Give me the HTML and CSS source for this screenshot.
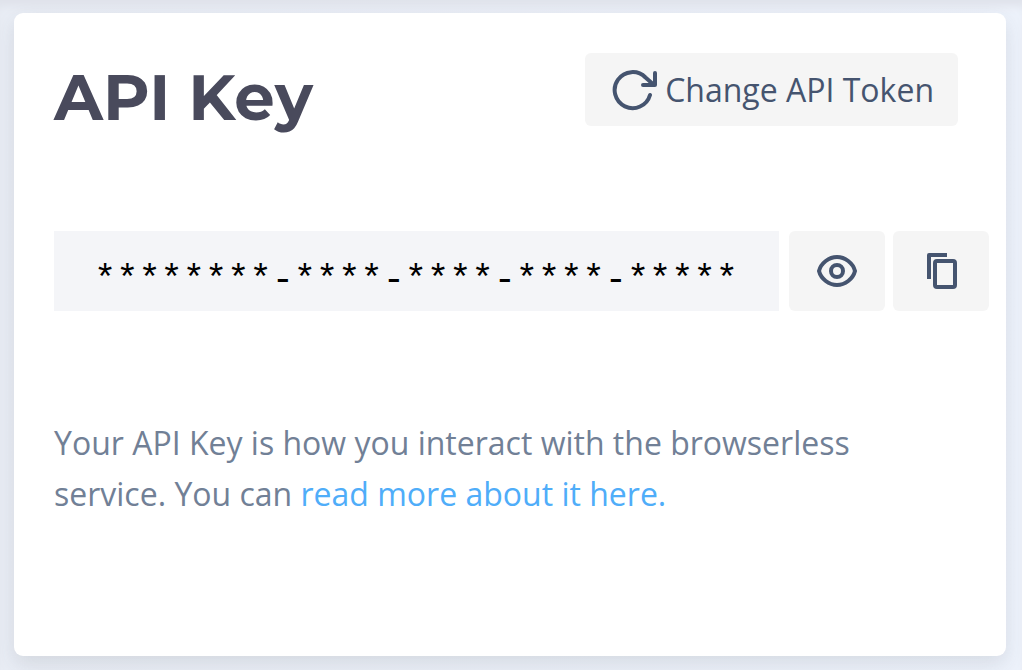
FILE: index.html
```html
<!DOCTYPE html>
<html lang="en">
<head>
<meta charset="utf-8">
<meta name="viewport" content="width=device-width, initial-scale=1">
<title>API Key</title>
<link rel="stylesheet" href="styles.css">
</head>
<body>
<main class="card">
  <header class="card-header">
    <h1 class="title"><label for="api-key">API Key</label></h1>
    <button class="button change-button" type="button">
      <svg class="refresh-icon" viewBox="0 0 46 42" fill="none" stroke="currentColor" stroke-width="4" stroke-linecap="round" stroke-linejoin="round" aria-hidden="true">
        <path d="M38 26A18 18 0 1 1 33.500 8.500L42 16M43 4v12H31"/>
      </svg>
      <span>Change API Token</span>
    </button>
  </header>
  <div class="key-row">
    <input class="key-input" id="api-key" type="text" value="********-****-****-****-*****" readonly>
    <button class="button icon-button" type="button" aria-label="Show API key">
      <svg class="icon" viewBox="0 0 40 40" fill="none" stroke="currentColor" stroke-width="4" aria-hidden="true">
        <path d="M2 20C4 12 12 6 20 6s16 6 18 14c-2 8-10 14-18 14S4 28 2 20Z"/>
        <circle cx="20" cy="20" r="6"/>
      </svg>
    </button>
    <button class="button icon-button" type="button" aria-label="Copy API key">
      <svg class="icon" viewBox="0 0 40 40" fill="none" stroke="currentColor" stroke-width="4" stroke-linejoin="round" aria-hidden="true">
        <path d="M8 28V4h18"/>
        <rect x="14" y="10" width="20" height="26" rx="2"/>
      </svg>
    </button>
  </div>
  <p class="description">Your API Key is how you interact with the browserless service. You can <a class="link" href="#docs">read more about it here.</a></p>
</main>
</body>
</html>
```
FILE: styles.css
```css
* {
  box-sizing: border-box;
}

body {
  margin: 0;
  padding: 13px 16px 14px 14px;
  min-height: 100vh;
  display: flex;
  background: linear-gradient(to right, #e9edf5, #edf2fb);
  box-shadow: inset 0 10px 10px -4px #dfe2ea;
  font-family: "Open Sans", "Noto Sans", sans-serif;
  font-size: 32px;
}

.card {
  flex: 1;
  min-width: 0;
  padding: 40px 17px 40px 40px;
  border-radius: 9px;
  background: #fff;
  box-shadow: 0 8px 20px rgba(60, 62, 70, 0.12);
}

.card-header {
  display: flex;
  align-items: flex-start;
  justify-content: space-between;
  padding-right: 31px;
}

.title {
  margin: 0;
  color: #494a5c;
  font-family: Montserrat, Inter, sans-serif;
  font-size: 64px;
  font-weight: 700;
  line-height: 88px;
}

.button {
  display: flex;
  align-items: center;
  justify-content: center;
  border: 0;
  border-radius: 6px;
  background: #f5f5f5;
  color: #45546f;
  font: inherit;
  cursor: pointer;
}

.change-button {
  gap: 7px;
  height: 73px;
  padding: 0 24px 0 27px;
  white-space: nowrap;
}

.refresh-icon {
  width: 46px;
  height: 42px;
}

.key-row {
  display: flex;
  gap: 8px;
  margin-top: 90px;
}

.key-input {
  flex: 1;
  min-width: 0;
  height: 80px;
  margin-right: 2px;
  padding: 18px 32px 0 40px;
  border: 0;
  border-radius: 0;
  background: #f4f5f8;
  color: #000;
  font-family: "Liberation Mono", monospace;
  font-size: 37px;
}

.icon-button {
  width: 96px;
  height: 80px;
  padding: 0;
}

.icon {
  width: 40px;
  height: 40px;
}

.description {
  margin: 106px 40px 0 0;
  color: #718096;
  line-height: 51px;
}

.link {
  color: #4fadf9;
  text-decoration: none;
}
```
